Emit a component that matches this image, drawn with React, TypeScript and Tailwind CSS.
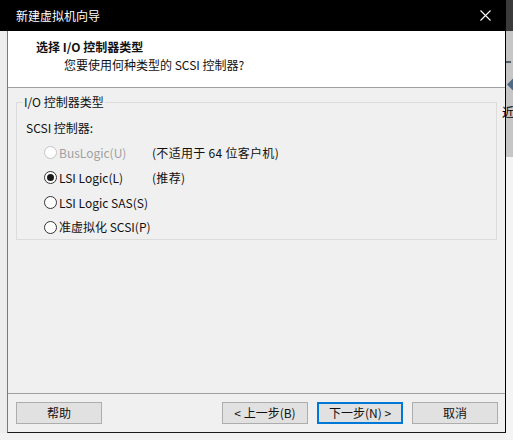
import React from 'react';

const Radio = ({ checked = false, disabled = false }: { checked?: boolean; disabled?: boolean }) => (
  <span
    className={`flex h-[13px] w-[13px] items-center justify-center rounded-full border bg-white ${
      disabled ? 'border-[#c4c4c4] bg-[#f0f0f0]' : 'border-[#333333]'
    }`}
  >
    {checked && <span className="h-[7px] w-[7px] rounded-full bg-[#1a1a1a]" />}
  </span>
);

const Button = ({ label, primary = false }: { label: string; primary?: boolean }) => (
  <button
    className={`flex h-[22px] w-[86px] items-center justify-center bg-[#e1e1e1] text-[12px] text-[#111] ${
      primary ? 'border-2 border-[#0078d7]' : 'border border-[#adadad]'
    }`}
  >
    {label}
  </button>
);

const App = () => {
  const options = [
    { label: 'BusLogic(U)', note: '(不适用于 64 位客户机)', disabled: true },
    { label: 'LSI Logic(L)', note: '(推荐)', checked: true },
    { label: 'LSI Logic SAS(S)', note: '' },
    { label: '准虚拟化 SCSI(P)', note: '' },
  ];

  return (
    <div
      className="flex h-[440px] w-[513px] overflow-hidden bg-[#f2f2f2] text-[12px] leading-[16px] text-[#111]"
      style={{ fontFamily: '"Noto Sans CJK SC", "Noto Sans", sans-serif' }}
    >
      {/* dialog column */}
      <div className="flex w-[506px] flex-col">
        <div className="flex h-[31px] items-center justify-between bg-black pl-[16px] pr-[10px] text-white">
          <span className="text-[12px]">新建虚拟机向导</span>
          <svg width="11" height="11" viewBox="0 0 11 11" className="mr-[5px]">
            <path d="M0.5 0.5 L10.5 10.5 M10.5 0.5 L0.5 10.5" stroke="white" strokeWidth="1.1" />
          </svg>
        </div>
        <div className="flex">
          <div className="w-[7px] bg-[#ededed]" />
          <div className="flex h-[402px] w-[499px] flex-col border-x border-b border-l-[#7a7a7a] border-r-black border-b-[#1a1a1a]">
            {/* header */}
            <div className="flex h-[56px] flex-col bg-white pt-[8px]">
              <div className="pl-[28px] font-bold leading-[16px]">选择 I/O 控制器类型</div>
              <div className="mt-[2px] pl-[56px]">您要使用何种类型的 SCSI 控制器?</div>
            </div>
            <div className="h-px bg-[#a0a0a0]" />
            {/* body */}
            <div className="flex-1 bg-[#f0f0f0] px-[8px] pt-[6px]">
              <fieldset className="border border-[#dcdcdc] pl-[9px]">
                <legend className="-ml-[3px] px-[1px]">I/O 控制器类型</legend>
                <div className="mt-[6px] flex h-[24px] items-center">SCSI 控制器:</div>
                {options.map((o, i) => (
                  <div key={i} className="flex h-[25px] items-center last:h-[24px]">
                    <span className="ml-[18px]">
                      <Radio checked={o.checked} disabled={o.disabled} />
                    </span>
                    <span className={`ml-[2px] w-[93px] ${o.disabled ? 'text-[#a0a0a0]' : ''}`}>{o.label}</span>
                    <span className="tracking-[0.3px]">{o.note}</span>
                  </div>
                ))}
              </fieldset>
            </div>
            <div className="h-px bg-[#a0a0a0]" />
            {/* footer */}
            <div className="flex h-[38px] items-start justify-between bg-[#f0f0f0] pl-[8px] pr-[7px] pt-[8px]">
              <Button label="帮助" />
              <div className="flex gap-[9px]">
                <Button label="< 上一步(B)" />
                <Button label="下一步(N) >" primary />
                <Button label="取消" />
              </div>
            </div>
          </div>
        </div>
      </div>
      {/* background app peeking out */}
      <div className="flex w-[7px] flex-col">
        <div className="h-[31px] bg-[#3a3a3a]" />
        <div className="flex h-[126px] flex-col bg-[#c6c6c6]">
          <div className="mt-[30px] h-[2px] w-[5px] bg-[#555d66]" />
          <svg width="7" height="13" viewBox="0 0 7 13" className="mt-[15px]">
            <path d="M7 0.5 L1 6.5 L7 12.5 Z" fill="#4e6a85" />
          </svg>
          <span className="mt-[14px] -ml-[4px] text-[12px] leading-[14px] text-black">近</span>
        </div>
        <div className="flex-1 bg-[#f4f4f4]" />
      </div>
    </div>
  );
};

export default App;
